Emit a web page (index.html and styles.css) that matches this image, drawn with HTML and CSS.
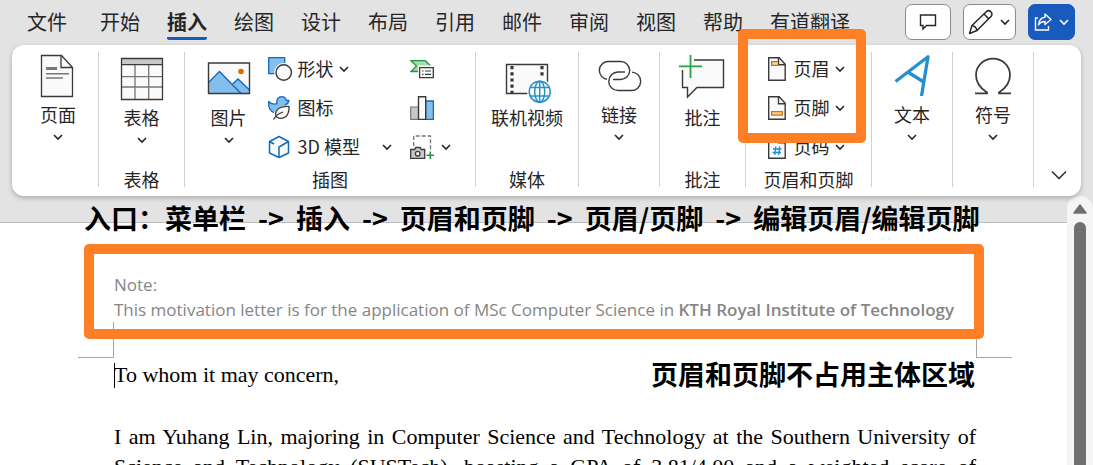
FILE: index.html
```html
<!DOCTYPE html>
<html lang="zh-CN">
<head>
<meta charset="utf-8">
<title>插入页眉和页脚</title>
<link rel="stylesheet" href="styles.css">
</head>
<body>
<svg class="defs" aria-hidden="true">
  <symbol id="chevron" viewBox="0 0 12 8"><path d="M2 2l4 4 4-4" fill="none" stroke="currentColor" stroke-width="1.600"/></symbol>
</svg>

<header class="topbar">
  <nav class="tabs">
    <button class="tab tab-file">文件</button>
    <button class="tab">开始</button>
    <button class="tab active">插入</button>
    <button class="tab">绘图</button>
    <button class="tab">设计</button>
    <button class="tab">布局</button>
    <button class="tab">引用</button>
    <button class="tab">邮件</button>
    <button class="tab">审阅</button>
    <button class="tab">视图</button>
    <button class="tab">帮助</button>
    <button class="tab">有道翻译</button>
  </nav>
  <div class="actions">
    <button class="action comments" aria-label="批注">
      <svg width="18" height="18" viewBox="0 0 18 18"><path d="M1.500 2h15v10.500h-9L4 16v-3.500H1.500z" fill="none" stroke="#262626" stroke-width="1.400"/></svg>
    </button>
    <button class="action editing" aria-label="编辑">
      <svg width="26" height="26" viewBox="0 0 26 26"><g fill="none" stroke="#262626" stroke-width="1.500" stroke-linejoin="round"><path d="M1.500 24.500L4 16.500 18.500 2.500c3-2.500 7 1.500 4.700 4.700L9 21.500z"/><path d="M16 5l5 5M4 16.500c2.500.500 4.500 2.500 5 5"/></g></svg>
      <svg class="chev"><use href="#chevron"/></svg>
    </button>
    <button class="action share" aria-label="共享">
      <svg width="18" height="18" viewBox="0 0 18 18"><g fill="none" stroke="#fff" stroke-width="1.400"><path d="M4 5H1.500v12h13v-4"/><path d="M11 1l6 5.500-6 5V8.500C8 8.500 6 9.500 4.500 12 5 7.500 7.500 4.500 11 4.300z" stroke-linejoin="round"/></g></svg>
      <svg class="chev"><use href="#chevron"/></svg>
    </button>
  </div>
</header>

<section class="ribbon">
  <div class="group plain first">
    <button class="big">
      <svg class="icon" viewBox="0 0 44 45"><path d="M5.500 3.500h20l11 12v29h-31z" fill="#fafafa" stroke="#3a3a3a" stroke-width="1.300"/><path d="M25 3.500v12h11.500" fill="none" stroke="#3a3a3a" stroke-width="1.300"/><path d="M10 16.500h11" stroke="#777" stroke-width="3"/><path d="M10 21.700h23M10 26h17" stroke="#777" stroke-width="1.400"/></svg>
      <span>页面</span><svg class="chev"><use href="#chevron"/></svg>
    </button>
  </div>

  <div class="group">
    <button class="big">
      <svg class="icon" viewBox="0 0 44 45"><path d="M1.500 3.500h41v41h-41z" fill="#fafafa"/><path d="M1.500 3.500h41v6h-41z" fill="#c8c8c8"/><path d="M1.500 21.700h41M1.500 32h41M15 10v34M28.700 10v34" stroke="#777" stroke-width="1.300"/><path d="M1.500 3.500h41v41h-41zM1.500 9.700h41" fill="none" stroke="#3a3a3a" stroke-width="1.300"/></svg>
      <span>表格</span><svg class="chev"><use href="#chevron"/></svg>
    </button>
    <h2>表格</h2>
  </div>

  <div class="group">
    <div class="tools illustration-tools">
      <button class="big">
        <svg class="icon" viewBox="0 0 44 45"><path d="M1.500 8h41v31h-41z" fill="#fafafa"/><path d="M25.700 28.300L31 24l11.500 11v4H33z" fill="#83beec"/><path d="M1.500 27.500L12.500 16.500 34.500 39h-33z" fill="#83beec"/><path d="M1.500 27.500l11-11L34.500 39M25.700 29l5.300-5 11.500 11" fill="none" stroke="#0f6cbd" stroke-width="1.400"/><circle cx="34" cy="16.500" r="2.800" fill="#e06c00"/><path d="M1.500 8h41v30.500h-41z" fill="none" stroke="#3a3a3a" stroke-width="1.400"/></svg>
        <span>图片</span><svg class="chev"><use href="#chevron"/></svg>
      </button>
      <div class="stack illustrations">
        <button class="small">
          <svg class="glyph" viewBox="0 0 24 24"><path d="M.7.700h16v16H.700z" fill="#83beec" stroke="#0f6cbd" stroke-width="1.300"/><circle cx="15.700" cy="15.500" r="9.500" fill="#fff"/><circle cx="15.700" cy="15.500" r="7.700" fill="#fafafa" stroke="#3a3a3a" stroke-width="1.400"/></svg>
          <span>形状</span><svg class="chev"><use href="#chevron"/></svg>
        </button>
        <button class="small">
          <svg class="glyph" viewBox="0 0 24 24"><path d="M.7 5.500c2 2.500 5 3 8.300 2.200C8 3.500 10.500.700 13.500.700c2.800 0 4.300 1.700 4.700 3.800h2.800c-.500 2.200-1.500 3.500-3.500 4l-4 8.500C6 19-.300 15 .700 5.500z" fill="#83beec" stroke="#0f6cbd" stroke-width="1.300" stroke-linejoin="round"/><path d="M5 23C4 15 11 8.500 23.500 9 24 18 19 26 9 22.500z" fill="#fff"/><path d="M8.500 21c-3-6 2-11 12.500-10.500.500 9.500-5.500 14.500-12.500 10.500z" fill="#fafafa" stroke="#3a3a3a" stroke-width="1.300"/><path d="M5.500 23.500c2-3.500 5-6 9.500-7.500" fill="none" stroke="#3a3a3a" stroke-width="1.300"/></svg>
          <span>图标</span>
        </button>
        <button class="small model">
          <svg class="glyph" viewBox="0 0 24 24"><path d="M11 1.500l9.500 5v11.500L11 22.500 1.500 18V6.500z" fill="#fafafa"/><path d="M6 9L1.500 6.500 11 1.500l9.500 5v11.500L11 22.500 1.500 18V6.500M11 22.500V12l9.500-5.500" fill="none" stroke="#0f6cbd" stroke-width="1.500" stroke-linejoin="round"/></svg>
          <span>3D 模型</span><svg class="chev"><use href="#chevron"/></svg>
        </button>
      </div>
      <div class="stack">
        <button class="small" aria-label="SmartArt">
          <svg class="glyph" viewBox="0 0 24 24"><path d="M1 3.700h14.500l5.500 5.500-4 5.300H1L6.500 9z" fill="#a1dcab" stroke="#2b9444" stroke-width="1.300"/><path d="M8 8.500h16v14H8z" fill="#fff"/><path d="M9.600 10.600h13.700v10H9.600z" fill="#fafafa" stroke="#3a3a3a" stroke-width="1.300"/><path d="M12 14h1.500m1.500 0h6M12 17.300h1.500m1.500 0h6" stroke="#3a3a3a" stroke-width="1.200"/></svg>
        </button>
        <button class="small" aria-label="图表">
          <svg class="glyph" viewBox="0 0 24 24"><path d="M.7 11h8v12.400h-8z" fill="#c8c8c8" stroke="#777" stroke-width="1.200"/><path d="M15.500 5h7.900v18.400h-7.900z" fill="#83beec" stroke="#0f6cbd" stroke-width="1.300"/><path d="M8.500.700h7.200v22.700H8.500z" fill="#fafafa" stroke="#3a3a3a" stroke-width="1.400"/></svg>
        </button>
        <button class="small" aria-label="屏幕截图">
          <svg class="glyph" viewBox="0 0 24 24"><path d="M3.700 11V1h16.800v15" fill="none" stroke="#777" stroke-width="1.300" stroke-dasharray="4 2"/><path d="M.700 14.500h4l1-2h4.500l1 2h3.500v9H.700z" fill="#c8c8c8" stroke="#3a3a3a" stroke-width="1.300"/><circle cx="7.700" cy="18.700" r="2.300" fill="#fafafa" stroke="#3a3a3a" stroke-width="1.300"/><path d="M20.300 16.500v7.500M16.500 20.300H24" stroke="#2b9444" stroke-width="1.500"/></svg>
          <svg class="chev"><use href="#chevron"/></svg>
        </button>
      </div>
    </div>
    <h2>插图</h2>
  </div>

  <div class="group">
    <button class="big">
      <svg class="icon" viewBox="0 0 44 45"><path d="M1.500 9.500h41v29h-41z" fill="#fafafa" stroke="#3a3a3a" stroke-width="1.400"/><path d="M7 11v27M37 11v12" stroke="#3a3a3a" stroke-width="3.200" stroke-dasharray="3.200 3"/><circle cx="34.700" cy="36.700" r="12.500" fill="#fff"/><g fill="none" stroke="#2490d0" stroke-width="1.500"><circle cx="34.700" cy="36.700" r="10.500"/><ellipse cx="34.700" cy="36.700" rx="5" ry="10.500"/><path d="M34.700 26v21.500M25.500 32.500h18.500M25.500 41h18.500"/></g></svg>
      <span>联机视频</span>
    </button>
    <h2>媒体</h2>
  </div>

  <div class="group plain">
    <button class="big">
      <svg class="icon" viewBox="0 0 44 45"><g fill="none" stroke="#3a3a3a" stroke-width="1.400"><path d="M10 27.200a8.900 8.900 0 0 1 .7-17.700h13a9 9 0 0 1 0 18H16"/><path d="M23 20h-2a9.200 9.200 0 0 0 0 18.500h13a9.200 9.200 0 0 0 1-18.400"/><path d="M23 20h5"/></g></svg>
      <span>链接</span><svg class="chev"><use href="#chevron"/></svg>
    </button>
  </div>

  <div class="group">
    <button class="big">
      <svg class="icon" viewBox="0 0 44 45"><path d="M1.500 5h41v27.500H16L6.500 42v-9.500h-5z" fill="#fafafa"/><path d="M-2 5v9h15V4H1" fill="#fff"/><path d="M1.500 15v17.500h5V42L16 32.500h26.500V5H13" fill="none" stroke="#3a3a3a" stroke-width="1.400"/><path d="M9.500 0v23M-2 11.300h23" stroke="#2b9f4b" stroke-width="1.800"/></svg>
      <span>批注</span>
    </button>
    <h2>批注</h2>
  </div>

  <div class="group marked">
    <div class="tools">
      <div class="stack header-footer">
        <button class="small">
          <svg class="doc" viewBox="0 0 20 24"><path d="M1.700.700h10.500l6 6.500v16H1.700z" fill="#fafafa" stroke="#3a3a3a" stroke-width="1.400"/><path d="M11.500.700v7h6.500" fill="none" stroke="#3a3a3a" stroke-width="1.400"/><path d="M11 4.700H4.700v3.600H11" fill="#fcd39b" stroke="#e06c00" stroke-width="1.300"/></svg>
          <span>页眉</span><svg class="chev"><use href="#chevron"/></svg>
        </button>
        <button class="small">
          <svg class="doc" viewBox="0 0 20 24"><path d="M1.700.700h10.500l6 6.500v16H1.700z" fill="#fafafa" stroke="#3a3a3a" stroke-width="1.400"/><path d="M11.500.700v7h6.500" fill="none" stroke="#3a3a3a" stroke-width="1.400"/><path d="M4.700 15.700h10.600v3.400H4.700z" fill="#fcd39b" stroke="#e06c00" stroke-width="1.300"/></svg>
          <span>页脚</span><svg class="chev"><use href="#chevron"/></svg>
        </button>
        <button class="small">
          <svg class="doc" viewBox="0 0 20 24"><path d="M1.700.700h10.500l6 6.500v16H1.700z" fill="#fafafa" stroke="#3a3a3a" stroke-width="1.400"/><path d="M11.500.700v7h6.500" fill="none" stroke="#3a3a3a" stroke-width="1.400"/><path d="M8.700 11.500l-1 8.500M12.700 11.500l-1 8.500M6 14h8.500M5.500 17.500H14" stroke="#2490d0" stroke-width="1.400"/></svg>
          <span>页码</span><svg class="chev"><use href="#chevron"/></svg>
        </button>
      </div>
    </div>
    <h2>页眉和页脚</h2>
    <div class="highlight ribbon-highlight"></div>
  </div>

  <div class="group plain">
    <button class="big">
      <svg class="icon" viewBox="0 0 44 45"><path d="M5.500 29.500L38 4.800 31.500 44M18.500 20.500L33 29.500" fill="none" stroke="#2490d0" stroke-width="3.300" stroke-linejoin="round"/></svg>
      <span>文本</span><svg class="chev"><use href="#chevron"/></svg>
    </button>
  </div>

  <div class="group plain">
    <button class="big">
      <svg class="icon" viewBox="0 0 44 45"><path d="M4 41.300h12V40.500C9 36 5 30 5 23a17 16.300 0 0 1 34 0c0 7-4 13-11 17.500v.8h12" fill="none" stroke="#3a3a3a" stroke-width="1.800"/></svg>
      <span>符号</span><svg class="chev"><use href="#chevron"/></svg>
    </button>
  </div>

  <div class="group plain last">
    <button class="collapse" aria-label="折叠功能区"><svg width="16" height="10" viewBox="0 0 16 10"><path d="M1 1.500l7 7 7-7" fill="none" stroke="#262626" stroke-width="1.500"/></svg></button>
  </div>
</section>

<main class="workspace">
  <div class="canvas">
    <p class="caption path">
      <span>入口：菜单栏</span><span>-&gt;</span><span>插入</span><span>-&gt;</span><span>页眉和页脚</span><span>-&gt;</span><span>页眉/页脚</span><span>-&gt;</span><span>编辑页眉/编辑页脚</span>
    </p>
    <article class="page">
      <header class="page-header">
        <p>Note:</p>
        <p>This motivation letter is for the application of MSc Computer Science in <b>KTH Royal Institute of Technology</b></p>
        <div class="highlight header-highlight"></div>
      </header>
      <div class="corners"><i class="corner left"></i><i class="corner right"></i></div>
      <div class="letter">
        <p class="greeting"><span class="caret"></span>To whom it may concern,</p>
        <p class="caption remark">页眉和页脚不占用主体区域</p>
        <p class="paragraph">I am Yuhang Lin, majoring in Computer Science and Technology at the Southern University of Science and Technology (SUSTech), boasting a GPA of 3.81/4.00 and a weighted score of</p>
      </div>
    </article>
  </div>
  <div class="scrollbar">
    <svg width="14" height="10" viewBox="0 0 14 10"><path d="M7 1l6 8H1z" fill="#707070" stroke="#707070" stroke-width="1.500" stroke-linejoin="round"/></svg>
    <div class="thumb"></div>
  </div>
</main>
</body>
</html>
```
FILE: styles.css
```css
* { box-sizing: border-box; }

body {
  margin: 0;
  height: 100vh;
  overflow: hidden;
  display: flex;
  flex-direction: column;
  background: #e3e3e3;
  color: #262626;
  font-family: "Noto Sans CJK SC", sans-serif;
  font-size: 18px;
}

p, h2 { margin: 0; }

button {
  padding: 0;
  border: 0;
  background: none;
  color: inherit;
  font: inherit;
}

svg { display: block; flex: none; }
.defs { position: absolute; width: 0; height: 0; }
.chev { width: 12px; height: 8px; }

/* Tab row */
.topbar {
  flex: none;
  display: flex;
  justify-content: space-between;
  height: 45px;
  padding: 4px 18px 0 27px;
}

.tabs { display: flex; gap: 27px; align-items: flex-start; }
.tab {
  height: 36px;
  padding-top: 3px;
  border-bottom: 3px solid transparent;
  font-size: 20px;
  line-height: 30px;
  white-space: nowrap;
}
.tab-file { margin-right: 6px; }
.tab.active { border-color: #185abd; border-radius: 2px; font-weight: 700; }

.actions { display: flex; gap: 12px; }
.action {
  display: flex;
  align-items: center;
  justify-content: center;
  gap: 5px;
  height: 36px;
  border: 1px solid #8a8a8a;
  border-radius: 7px;
  background: #fff;
}
.comments { width: 46px; }
.editing { width: 53px; }
.share { width: 47px; gap: 6px; border-color: #185abd; background: #185abd; color: #fff; }

/* Ribbon */
.ribbon {
  position: relative;
  z-index: 1;
  flex: none;
  display: grid;
  grid-template-columns: 87fr 86fr 291fr 103fr 81fr 86fr 126fr 81fr 81fr 47fr;
  margin: 0 12px;
  padding: 7px 0 9px;
  border-radius: 12px;
  background: #fff;
  box-shadow: 0 2px 5px rgba(0, 0, 0, 0.25);
}

.group {
  position: relative;
  display: flex;
  flex-direction: column;
  align-items: center;
  min-height: 135px;
  padding-top: 3px;
  border-right: 1px solid #d1d1d1;
}
.group.plain { padding-top: 0; }
.group.first { padding-left: 6px; }
.group.last { justify-content: flex-end; padding: 0 0 7px 2px; border: 0; }
.group h2 {
  margin-top: auto;
  font-size: 18px;
  font-weight: 400;
  line-height: 16px;
  white-space: nowrap;
}

.big {
  display: flex;
  flex-direction: column;
  align-items: center;
  line-height: 24px;
  white-space: nowrap;
}
.big .icon { width: 44px; height: 45px; margin-bottom: 5px; overflow: visible; }
.big .chev { margin-top: 7px; }

.tools { display: flex; align-items: flex-start; gap: 17px; }
.illustration-tools { padding-right: 2px; }
.stack { display: flex; flex-direction: column; gap: 15px; padding-top: 2px; }
.small {
  display: flex;
  align-items: center;
  gap: 4px;
  height: 24px;
  line-height: 22px;
  white-space: nowrap;
}
.small span { padding-bottom: 2px; }
.glyph { width: 24px; height: 24px; margin-right: 2px; }
.doc { width: 20px; height: 24px; margin-right: 3px; }
.illustrations { width: 125px; }
.model .chev { margin-left: auto; }
.header-footer { padding-right: 5px; }

/* Orange frames */
.highlight {
  position: absolute;
  border: 10px solid #ff7f27;
  border-radius: 5px;
  pointer-events: none;
}
.ribbon-highlight { top: -23px; right: 5px; left: -8px; height: 114px; }
.header-highlight { top: -28px; right: -8px; bottom: -17px; left: -30px; }

/* Document */
.workspace { flex: 1; min-height: 0; display: flex; }
.canvas {
  position: relative;
  flex: 1;
  min-width: 0;
  padding-top: 26px;
}

.caption {
  position: absolute;
  color: #000;
  font-size: 27px;
  font-weight: 700;
  line-height: 36px;
  white-space: nowrap;
}
.path { top: 4px; left: 84px; display: flex; gap: 12px; }
.remark { top: -2px; right: 1px; }

.page {
  padding: 49px 91px 0 114px;
  border-top: 1px solid #bdbdbd;
  background: #fff;
}
.page-header {
  position: relative;
  z-index: 1;
  color: #868686;
  font-family: "Open Sans", sans-serif;
  font-size: 17px;
  line-height: 25px;
  white-space: nowrap;
}
.page-header b { font-weight: 600; }
.corners { display: flex; justify-content: space-between; margin: 0 -36px; }
.corner { width: 36px; height: 36px; border-bottom: 1px solid #a6a6a6; }
.corner.left { border-right: 1px solid #a6a6a6; }
.corner.right { border-left: 1px solid #a6a6a6; }

.letter {
  position: relative;
  padding-top: 2px;
  color: #000;
  font-family: "Liberation Serif", serif;
  font-size: 22px;
  line-height: 30px;
}
.letter .caption { font-family: "Noto Sans CJK SC", sans-serif; }
.greeting { display: flex; align-items: center; }
.caret { width: 1px; height: 25px; margin-right: -1px; background: #000; }
.paragraph { margin-top: 32px; text-align: justify; text-align-last: justify; }

.scrollbar {
  display: flex;
  flex-direction: column;
  align-items: center;
  gap: 8px;
  width: 26px;
  padding-top: 8px;
  border-radius: 13px 13px 0 0;
  background: #f5f5f5;
}
.thumb { flex: 1; width: 12px; border-radius: 6px 6px 0 0; background: #707070; }
```
